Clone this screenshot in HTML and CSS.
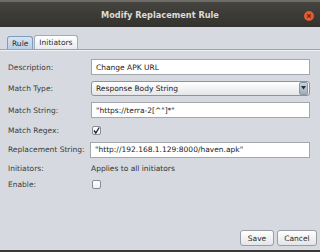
FILE: index.html
```html
<!DOCTYPE html>
<html>
<head>
<meta charset="utf-8">
<link rel="stylesheet" href="styles.css">
</head>
<body>
<div class="window">
  <div class="titlebar">
    <span class="title">Modify Replacement Rule</span>
    <span class="close"><svg width="10" height="10" viewBox="0 0 10 10"><circle cx="5" cy="5" r="5" fill="#e35b2c"/><path d="M3.3 3.3 L6.7 6.7 M6.7 3.3 L3.3 6.7" stroke="#5a2414" stroke-width="1.1"/></svg></span>
  </div>
  <div class="body">
    <div class="tabs">
      <div class="tab selected">Rule</div>
      <div class="tab">Initiators</div>
    </div>
    <div class="panel">
      <div class="form">
        <div class="label">Description:</div>
        <div class="field"><div class="input">Change APK URL</div></div>
        <div class="label">Match Type:</div>
        <div class="field"><div class="combo"><span>Response Body String</span><span class="arrow"><svg width="5" height="4" viewBox="0 0 5 4"><path d="M0 0 H5 L2.5 3.5 Z" fill="#2b2b2b"/></svg></span></div></div>
        <div class="label">Match String:</div>
        <div class="field"><div class="input">"https://terra-2[^"]*"</div></div>
        <div class="label">Match Regex:</div>
        <div class="field"><div class="check"><svg width="9" height="9" viewBox="0 0 9 9"><path d="M2 4.5 L3.8 7 L7.2 1.5" fill="none" stroke="#222" stroke-width="1.3"/></svg></div></div>
        <div class="label">Replacement String:</div>
        <div class="field wide"><div class="input">"http://192.168.1.129:8000/haven.apk"</div></div>
        <div class="label">Initiators:</div>
        <div class="field"><span class="text">Applies to all initiators</span></div>
        <div class="label">Enable:</div>
        <div class="field"><div class="check"></div></div>
      </div>
    </div>
    <div class="buttons">
      <div class="btn save">Save</div>
      <div class="btn cancel">Cancel</div>
    </div>
  </div>
</div>
</body>
</html>
```
FILE: styles.css
```css
html, body {
  margin: 0;
  padding: 0;
  background: #2a2926;
}
.window {
  width: 320px;
  height: 252px;
  display: flex;
  flex-direction: column;
  font-family: "DejaVu Sans", sans-serif;
  font-size: 7.5px;
  color: #333;
  overflow: hidden;
}
.titlebar {
  height: 27px;
  flex: none;
  box-sizing: border-box;
  border-top: 2px solid #6e6c66;
  background: linear-gradient(#45443f, #3a3935 60%, #33322e);
  display: flex;
  align-items: center;
  justify-content: center;
  position: relative;
}
.title {
  font-weight: bold;
  font-size: 8.2px;
  color: #dfdbd2;
  margin-top: 1px;
}
.close {
  position: absolute;
  right: 6px;
  top: 9px;
  width: 10px;
  height: 10px;
  display: flex;
}
.body {
  flex: 1;
  display: flex;
  flex-direction: column;
  background: #d6d9df;
  border-bottom: 2px solid #3a3936;
}
.tabs {
  display: flex;
  align-items: flex-end;
  padding: 7px 0 0 7px;
  height: 15px;
}
.tab {
  height: 13px;
  box-sizing: border-box;
  padding: 0 4px;
  border: 1px solid #a7abb1;
  border-bottom: none;
  border-radius: 3px 3px 0 0;
  background: linear-gradient(#ffffff, #e9ebee);
  display: flex;
  align-items: center;
  color: #2c2c2c;
  margin-right: 1px;
  height: 14px;
}
.tab.selected {
  height: 13px;
  padding: 0 4px;
  background: linear-gradient(#d6e3f1, #b9cde3);
  border-color: #7f9cbf;
}
.panel {
  border-top: 1px solid #8ea6c3;
  box-shadow: inset 0 1px 0 #eef1f5;
  padding: 7px 10px 0 8px;
}
.form {
  display: grid;
  grid-template-columns: 83px 1fr;
  grid-template-rows: 20px 22px 22px 19px 19px 19px 12px;
  align-items: center;
}
.label {
  color: #3b3b3b;
}
.field {
  display: flex;
  align-items: center;
}
.field.wide {
  margin-left: -1px;
}
.input {
  flex: 1;
  height: 16px;
  box-sizing: border-box;
  background: #fff;
  border: 1px solid #a3a6ab;
  padding: 0 4px;
  display: flex;
  align-items: center;
  color: #222;
  white-space: nowrap;
}
.combo {
  flex: 1;
  height: 15px;
  box-sizing: border-box;
  border: 1px solid #8f9398;
  border-radius: 3px;
  background: linear-gradient(#ffffff, #e4e6e9);
  display: flex;
  align-items: center;
  justify-content: space-between;
  padding: 0 1px 0 4px;
  color: #222;
}
.arrow {
  width: 7px;
  height: 11px;
  border-radius: 2px;
  background: linear-gradient(#c9d3de, #9eadbf);
  border: 1px solid #8b97a6;
  display: flex;
  align-items: center;
  justify-content: center;
}
.check {
  width: 9px;
  height: 9px;
  box-sizing: border-box;
  border: 1px solid #8a8d92;
  border-radius: 2px;
  background: linear-gradient(#ffffff, #eceef1);
  margin-left: 1px;
  display: flex;
  align-items: center;
  justify-content: center;
}
.check svg {
  margin: -1px;
}
.text {
  color: #333;
}
.buttons {
  margin-top: auto;
  display: flex;
  justify-content: flex-end;
  gap: 3px;
  padding: 0 3px 4px 0;
}
.btn {
  height: 16px;
  box-sizing: border-box;
  border: 1px solid #9a9ea4;
  border-radius: 3px;
  background: linear-gradient(#ffffff, #e3e5e8);
  display: flex;
  align-items: center;
  justify-content: center;
  color: #2a2a2a;
}
.save { width: 34px; }
.cancel { width: 40px; }
```
